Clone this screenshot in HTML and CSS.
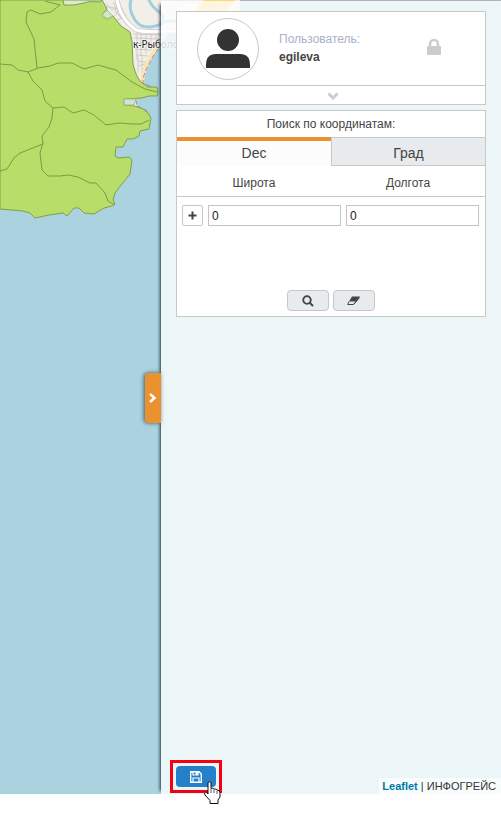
FILE: index.html
```html
<!DOCTYPE html>
<html lang="ru">
<head>
<meta charset="utf-8">
<meta name="viewport" content="width=device-width, initial-scale=1">
<title>Карта</title>
<link rel="stylesheet" href="styles.css">
</head>
<body>
<div class="app">
  <svg class="map" role="img" aria-label="Карта">
    <path fill="#f2efe9" d="M98 0H240V14L205 20L175 30L163 37Q152 52 147 66Q142 75 142 84L125 70Z"/>
    <path fill="#f2efe9" d="M124 98H137L136 104L138 108H124Z"/>
    <path fill="#ffffff" opacity=".7" d="M184 4Q202 0 204 18Q205 32 190 30Q176 32 178 18Z"/>
    <path fill="#ffd975" d="M204 0H235L222 18L211 36L205 38L193 12Z"/>
    <g fill="none" stroke="#cfcbcb">
      <path d="M133 34l30 1M134 38l25 1M135 43l20 2M135 49l16 1M136 55l12 1M137 61l9 1M137 33v27M141 32v24M146 32v22M151 32v18M156 32v12M138 66l7-2M138 56v17M142 56v17"/>
      <path d="M106 3l6 7 8-5 6 11-11 5M113 2l5 10-4 4M103 6l17 3M122 19l-7-8 3-9M118 14l12 13"/>
    </g>
    <g fill="none" stroke-linecap="round">
      <path stroke="#d5d0cf" stroke-width="5" d="M117 0Q121 20 136 30Q148 33 166 31L205 30"/>
      <path stroke="#fff" stroke-width="3" d="M117 0Q121 20 136 30Q148 33 166 31L205 30"/>
      <path stroke="#9fcfdb" stroke-width="3" d="M131 0Q128 9 135 20Q140 28 151 27L160 25Q165 19 178 22M149 0Q152 7 159 12Q166 16 160 24"/>
      <path stroke="#f7e7ae" stroke-width="4" d="M165 37Q154 49 148 62Q143 72 142 82"/>
      <path stroke="#b77ac7" stroke-dasharray="4 3" d="M167 38Q155 51 149 64Q143 74 143 83L158 90M136 100l1 6 9 4 4 7-1 11M177 31l15-5 24-22"/>
    </g>
    <path class="land" d="M0 0H102L107 9L102 15L107 19L113 16L121 26L130 32L132 41L133 64Q136 77 141 82L148 87L157 87L158 92L157 96L149 96L142 98L124 99L124 105L135 106L143 109L148 113L151 118L149 129L140 131L139 136L133 139L127 139L123 147L116 147L115 156L119 158L129 157L132 160L130 174L122 184L115 193L113 200L115 204L112 206L104 208L94 214L84 213L79 208L74 208L67 216L63 213L49 215L35 218L30 213L23 211L0 209Z"/>
    <path fill="#cfe6c8" stroke="#9fbd8c" d="M102 15L107 10L113 16L107 19Z"/>
    <path fill="#cfe6c8" stroke="#9fbd8c" d="M124 99L136 99L134 105L124 105Z"/>
    <path fill="#dce9cf" stroke="#7fa04c" d="M63 0H102L100 2Q88 1 84 3L74 5L64 5Z"/>
    <g class="paths">
      <path d="M45 1L60 5L51 12L40 14L31 10L27 12L26 22L34 39L37 68"/>
      <path d="M0 64L12 65L18 70L28 72L38 68L50 66L58 63L72 63L84 69L98 65L116 70L132 82L145 89L157 92"/>
      <path d="M28 72L33 81L42 90L45 101L53 108L64 107L73 113L84 110L94 115L106 125L119 123L132 124L141 124L149 120"/>
      <path d="M53 108L52 118L49 127L42 136L43 144L20 153L14 158L7 169L0 171M43 143L40 153L42 170L48 176L60 176L68 175L78 177L90 183L96 183L105 193L108 201L115 205"/>
    </g>
    <text class="town" x="133" y="48">к-Рыболов</text>
  </svg>

  <aside class="sidebar">
    <button class="handle" type="button" aria-label="Свернуть панель">
      <svg width="8" height="12" viewBox="0 0 8 12"><path d="M1 2L5.500 6L1 10" fill="none" stroke="#fff" stroke-width="2.500"/></svg>
    </button>

    <section class="card">
      <div class="user">
        <svg class="avatar" viewBox="0 0 62 62" aria-hidden="true">
          <circle cx="31" cy="31" r="30.500" fill="#fff" stroke="#c8c8c8"/>
          <circle cx="31" cy="22" r="11" fill="#333"/>
          <path fill="#333" d="M9 50V47Q9 36 19 36H43Q53 36 53 47V50Z"/>
        </svg>
        <div class="who"><span class="role">Пользователь:</span><strong>egileva</strong></div>
        <svg class="lock" viewBox="0 0 14 16" aria-hidden="true">
          <path d="M3 8V5a4 4 0 0 1 8 0V8" fill="none" stroke="#ccc" stroke-width="2.400"/>
          <rect y="7" width="14" height="9" rx="1" fill="#ccc"/>
        </svg>
      </div>
      <button class="expand" type="button" aria-label="Развернуть">
        <svg width="12" height="8" viewBox="0 0 12 8"><path d="M1.500 1.500L6 6L10.500 1.500" fill="none" stroke="#ccc" stroke-width="3"/></svg>
      </button>
    </section>

    <section class="card">
      <h2 class="title">Поиск по координатам:</h2>
      <div class="tabs">
        <button class="tab active" type="button">Dec</button>
        <button class="tab" type="button">Град</button>
      </div>
      <div class="heads">
        <label for="lat">Широта</label>
        <label for="lon">Долгота</label>
      </div>
      <div class="fields">
        <button class="add" type="button" aria-label="Добавить">
          <svg width="9" height="9" viewBox="0 0 9 9"><path d="M4.500 0.500V8.500M0.500 4.500H8.500" stroke="#444" stroke-width="2"/></svg>
        </button>
        <input id="lat" type="text" value="0">
        <input id="lon" type="text" value="0">
      </div>
      <div class="actions">
        <button type="button" aria-label="Найти">
          <svg width="12" height="12" viewBox="0 0 12 12"><circle cx="5" cy="5" r="3.800" fill="none" stroke="#444" stroke-width="1.800"/><path d="M7.500 7.500L11 11" stroke="#444" stroke-width="2"/></svg>
        </button>
        <button type="button" aria-label="Очистить">
          <svg width="14" height="10" viewBox="0 0 14 10"><path d="M5 0.500H13L9.500 5.500H2Z" fill="#444"/><path d="M2 5.500L0.700 8.500H6.500L12.700 1.500M9 5.500L6.500 8.500" fill="none" stroke="#444"/></svg>
        </button>
      </div>
    </section>

    <div class="footer">
      <div class="highlight">
        <button class="save" type="button" aria-label="Сохранить">
          <svg width="12" height="12" viewBox="0 0 12 12" fill="none" stroke="#fff"><path stroke-width="1.400" d="M0.700 0.700H9L11.300 3V11.300H0.700Z"/><path stroke-width="1.200" d="M3 11V7H9V11M3 1V4H8V1"/><path d="M6 1.500H7.500V3.500H6Z" fill="#fff"/></svg>
        </button>
        <svg class="cursor" width="18" height="24" viewBox="0 0 18 24" aria-hidden="true">
          <path d="M4 13V2Q4 0.700 5.500 0.700T7 2V7.500Q9 6.500 10 8.200Q12 7.500 13 9Q16 9 16 12V16L14 19V22.500H6V19.500L1 14Q-0.200 11.500 1.500 11.200Q2.800 11 4 13Z" fill="#fff" stroke="#111"/>
          <path d="M7 8V12M10 9V12M13 10V13" stroke="#111" stroke-width=".7" fill="none"/>
        </svg>
      </div>
      <div class="credit"><a href="#">Leaflet</a> | ИНФОГРЕЙС</div>
    </div>
  </aside>
</div>
</body>
</html>
```
FILE: styles.css
```css
* {
  box-sizing: border-box;
}

body {
  min-height: 100vh;
  margin: 0;
  padding-bottom: 19px;
  background: #fff;
  color: #444;
  font: 12px/16px "Liberation Sans", Arial, sans-serif;
}

button,
input {
  margin: 0;
  padding: 0;
  color: inherit;
  font: inherit;
}

button {
  display: flex;
  align-items: center;
  justify-content: center;
  border: 1px solid #c4c8ca;
  background: #e7ebee;
  cursor: pointer;
}

.app {
  position: relative;
  display: flex;
  justify-content: flex-end;
  min-height: calc(100vh - 19px);
  border-top: 1px solid #b5b2b6;
  background: #aad3df;
}

.map {
  position: absolute;
  top: -1px;
  left: 0;
  width: 100%;
  height: 100%;
}

.land {
  fill: #b8dd69;
  stroke: #829d4f;
}

.paths {
  fill: none;
  stroke: #7c9b45;
}

.town {
  fill: #222;
  stroke: #fff;
  stroke-width: 1px;
  paint-order: stroke;
  font: 10px "Noto Sans", sans-serif;
}

.sidebar {
  position: relative;
  display: flex;
  flex-direction: column;
  gap: 5px;
  width: 340px;
  padding: 10px 15px 0;
  background: rgb(253 254 254 / 80%);
  box-shadow: -4px 0 3px -3px #234;
}

.handle {
  position: absolute;
  top: 372px;
  left: -16px;
  width: 16px;
  height: 50px;
  border: 0;
  border-radius: 4px 0 0 4px;
  background: #e9922f;
  box-shadow: -1px 0 4px #456;
}

.card {
  border: 1px solid #c8c8c8;
  background: #fff;
}

.user {
  display: flex;
  align-items: center;
  height: 73px;
  padding: 0 44px 0 20px;
}

.avatar {
  width: 62px;
  height: 62px;
}

.who {
  display: flex;
  flex: 1;
  flex-direction: column;
  gap: 2px;
  padding: 0 0 2px 20px;
}

.role {
  color: #a9b0c7;
}

.lock {
  width: 14px;
  height: 16px;
  margin-bottom: 3px;
}

.expand {
  width: 100%;
  height: 19px;
  padding: 2px 0 0 4px;
  border-width: 1px 0 0;
  border-color: #c8c8c8;
  background: #fff;
}

.title {
  margin: 0;
  padding: 5px 0;
  font-size: 12px;
  font-weight: 400;
  line-height: 16px;
  text-align: center;
}

.tabs {
  display: grid;
  grid-template-columns: 1fr 1fr;
  height: 29px;
}

.tab {
  padding-top: 2px;
  border-width: 1px 0 1px 1px;
  border-color: #c8c8c8;
  font-size: 14px;
}

.tab.active {
  padding: 0 0 2px;
  border-width: 4px 0 0;
  border-color: #e9922f;
  background: #fcfcfc;
}

.heads {
  display: grid;
  grid-template-columns: 1fr 1fr;
  padding: 9px 0 5px;
  border-bottom: 1px solid #c8c8c8;
  text-align: center;
}

.fields {
  display: grid;
  grid-template-columns: 21px 1fr 1fr;
  gap: 5px;
  padding: 8px 6px 0 5px;
}

.fields input {
  width: 100%;
  min-width: 0;
  height: 21px;
  padding: 0 3px;
  border: 1px solid #c4c4c4;
  color: #222;
}

.add {
  height: 21px;
  border-radius: 2px;
  background: #fff;
}

.actions {
  display: flex;
  justify-content: center;
  gap: 4px;
  padding: 64px 0 5px;
}

.actions button {
  width: 42px;
  height: 21px;
  border-radius: 4px;
}

.footer {
  display: flex;
  align-items: flex-end;
  justify-content: space-between;
  margin: auto -15px 0 -6px;
}

.highlight {
  position: relative;
  margin-bottom: 1px;
  padding: 3px;
  border: 3px solid #f5000f;
}

.save {
  width: 40px;
  height: 21px;
  border: 0;
  border-radius: 4px;
  background: #2580ca;
}

.cursor {
  position: absolute;
  top: 18px;
  left: 31px;
}

.credit {
  padding: 0 5px 0 3px;
  background: rgb(255 255 255 / 70%);
  color: #333;
  font-size: 11px;
}

.credit a {
  color: #0078a8;
  font-weight: 700;
  text-decoration: none;
}
```
